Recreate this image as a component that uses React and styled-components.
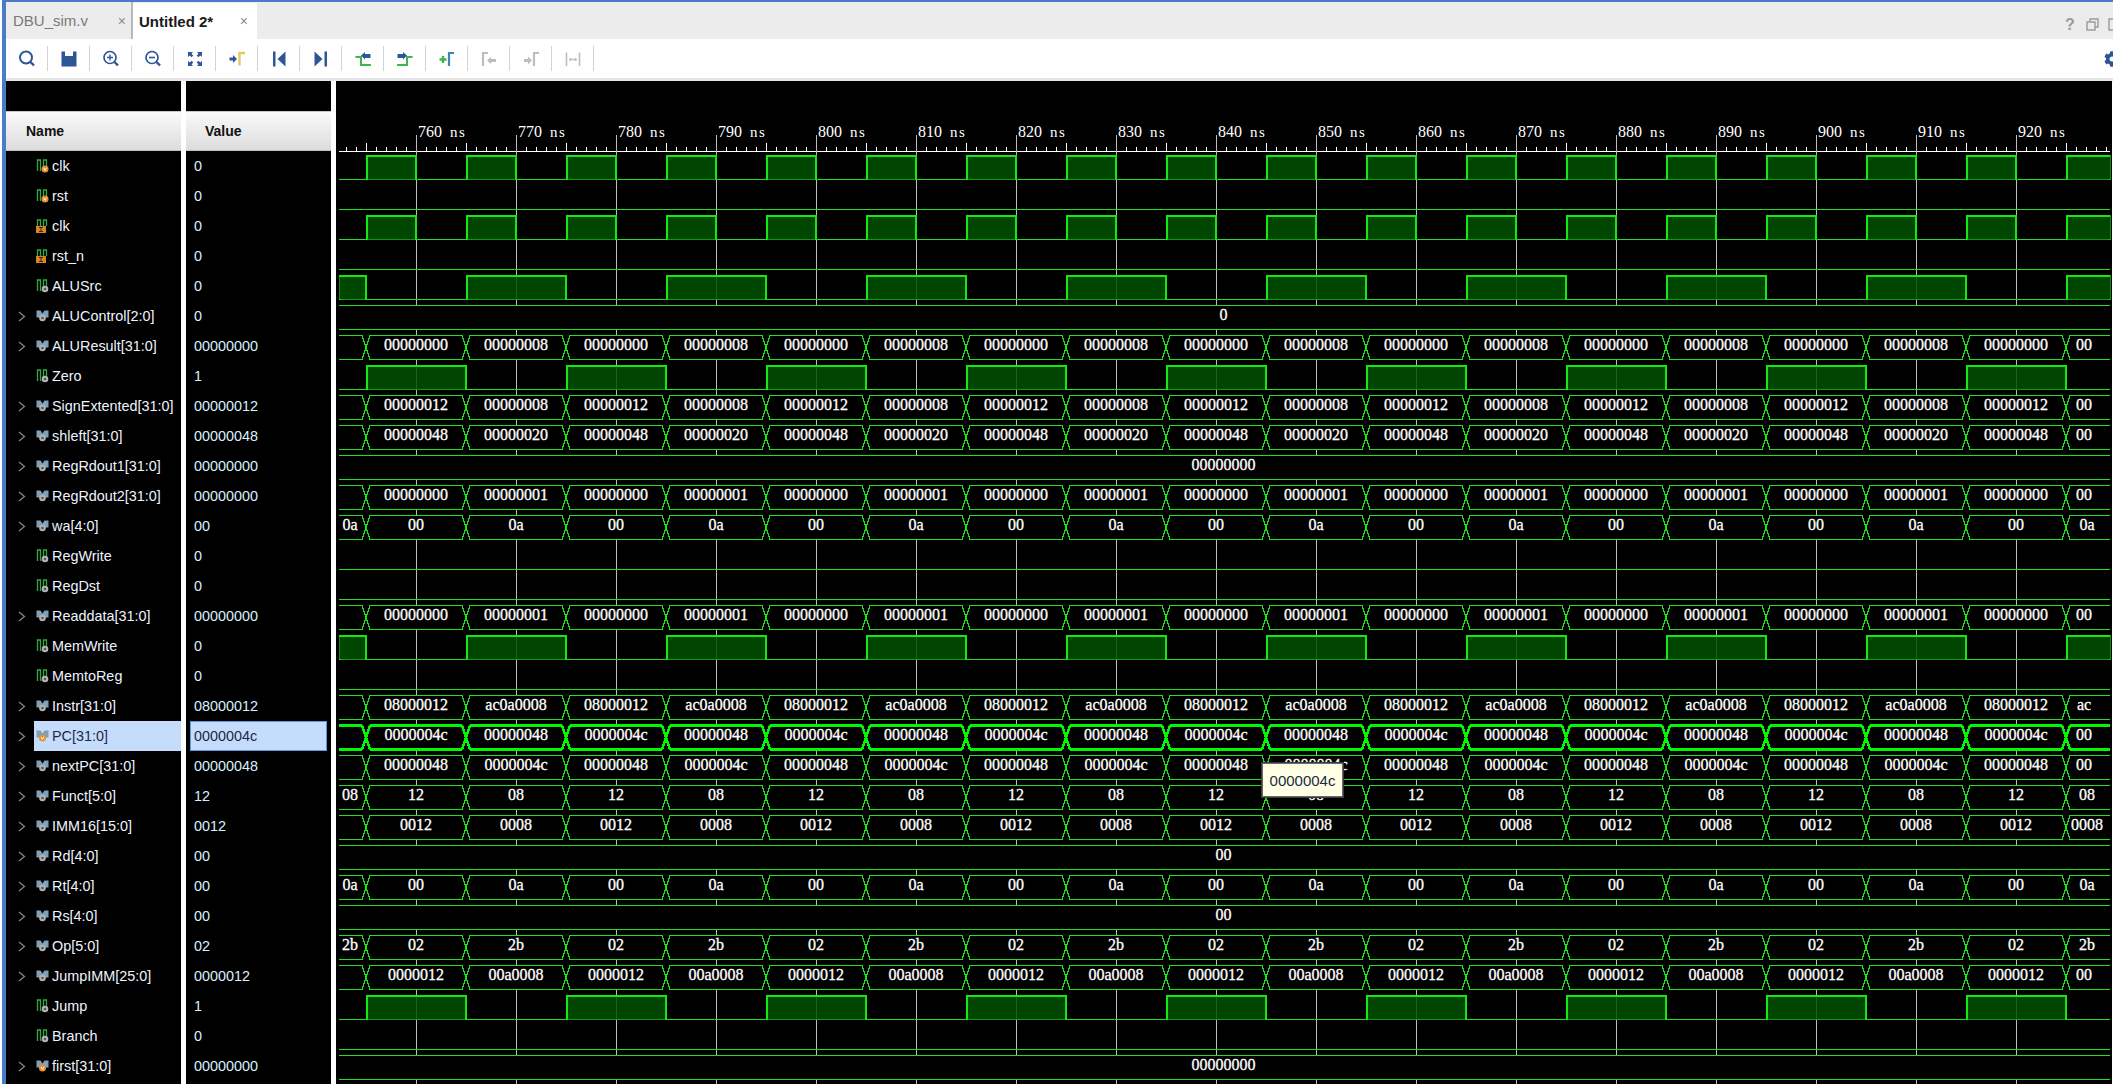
import React from 'react';
import styled, { createGlobalStyle } from 'styled-components';
import { FaCog } from 'react-icons/fa';

const GlobalStyle = createGlobalStyle`
  html, body {
    margin: 0;
    height: 100%;
    overflow: hidden;
    background: #fff;
    font-family: "Liberation Sans", Arial, sans-serif;
  }
`;

const Page = styled.div`
  height: 1084px;
  padding-left: 2px;
  box-sizing: border-box;
  overflow: hidden;
`;

const Frame = styled.div`
  display: flex;
  flex-direction: column;
  height: 100%;
  box-sizing: border-box;
  border-top: 2px solid #4a7cc7;
  border-left: 4px solid #4a7cc7;
`;

const TabBar = styled.div`
  display: flex;
  align-items: stretch;
  height: 37px;
  background: #ececec;
  flex: none;
`;

const Tab = styled.div`
  display: flex;
  align-items: center;
  justify-content: space-between;
  box-sizing: border-box;
  width: ${(p) => (p.$active ? '124px' : '127px')};
  margin-top: ${(p) => (p.$active ? '1px' : '0')};
  padding: 0 ${(p) => (p.$active ? '9px' : '5px')} 0 ${(p) => (p.$active ? '6px' : '7px')};
  background: ${(p) => (p.$active ? '#fff' : '#ececec')};
  border-right: ${(p) => (p.$active ? 'none' : '2px solid #b8b8b8')};
  color: ${(p) => (p.$active ? '#1a1a1a' : '#7a7a7a')};
  font-size: 15px;
  font-weight: ${(p) => (p.$active ? 700 : 400)};
  white-space: nowrap;
`;

const TabClose = styled.span`
  color: #8a8a8a;
  font-size: 14px;
  font-weight: 400;
`;

const WindowActions = styled.div`
  display: flex;
  align-items: center;
  gap: 9px;
  margin-left: auto;
  margin-right: -8px;
  padding-top: 8px;
  color: #9a9a9a;
`;

const Help = styled.span`
  font-size: 16px;
  font-weight: 700;
  width: 14px;
  text-align: center;
`;

const Toolbar = styled.div`
  display: flex;
  align-items: center;
  height: 39px;
  flex: none;
  background: #fff;
  border-bottom: 3px solid #e6e6e6;
`;

const ToolButton = styled.div`
  display: flex;
  align-items: center;
  justify-content: center;
  box-sizing: border-box;
  width: 42px;
  height: 25px;
  border-right: 1px solid #d4d4d4;
`;

const GearSlot = styled.div`
  display: flex;
  margin-left: auto;
  margin-right: -7px;
  color: #2f5597;
`;

const Viewer = styled.div`
  display: flex;
  flex: 1;
  min-height: 0;
  gap: 5px;
  background: #fff;
  padding-right: 1px;
`;

const Column = styled.div`
  flex: none;
  width: ${(p) => p.$width}px;
  background: #000;
  padding-top: 30px;
  overflow: hidden;
`;

const ColumnHeader = styled.div`
  display: flex;
  align-items: center;
  box-sizing: border-box;
  height: 40px;
  padding-left: ${(p) => p.$indent}px;
  background: linear-gradient(#fafafa, #dcdcdc);
  border-top: 1px solid #c8c8c8;
  border-bottom: 1px solid #bdbdbd;
  color: #111;
  font-size: 14px;
  font-weight: 700;
`;

const NameRow = styled.div`
  display: flex;
  align-items: center;
  height: 30px;
  position: relative;
  padding-left: 28px;
  color: ${(p) => (p.$selected ? '#1a2a44' : '#eef4ff')};
  font-size: 14.4px;
  white-space: nowrap;
`;

const Chevron = styled.svg`
  position: absolute;
  left: 12px;
  top: 10px;
`;

const NameCell = styled.div`
  display: flex;
  align-items: center;
  gap: 3px;
  box-sizing: border-box;
  flex: 1;
  height: 100%;
  padding: 0 0 1px 2px;
  background: ${(p) => (p.$selected ? '#c6dcfd' : 'transparent')};
`;

const ValueRow = styled.div`
  display: flex;
  align-items: center;
  box-sizing: border-box;
  height: 30px;
  margin: 0 4px;
  padding: 0 0 1px 3px;
  color: ${(p) => (p.$selected ? '#1a2a44' : '#dcefff')};
  background: ${(p) => (p.$selected ? '#c6dcfd' : 'transparent')};
  border: 1px solid ${(p) => (p.$selected ? '#5a9bd5' : 'transparent')};
  font-size: 14.4px;
`;

const WaveColumn = styled.div`
  position: relative;
  flex: 1;
  background: #000;
  overflow: hidden;
`;

const WaveSvg = styled.svg`
  display: block;
`;

const RulerLabel = styled.text`
  fill: #fff;
  font-family: "Liberation Serif", serif;
  font-size: 16px;
`;

const RulerUnit = styled.tspan`
  font-size: 15px;
  letter-spacing: 1.5px;
`;

const BusLabel = styled.text`
  fill: #fff;
  stroke: #fff;
  stroke-width: 0.3px;
  font-family: "Liberation Serif", serif;
  font-size: 16px;
  text-anchor: middle;
`;

const Tooltip = styled.div`
  position: absolute;
  left: 926px;
  top: 682px;
  display: flex;
  align-items: center;
  justify-content: center;
  box-sizing: border-box;
  width: 81px;
  height: 34px;
  background: #ffffe6;
  border: 1px solid #6a6a6a;
  box-shadow: 0 0 0 1px #3a3a3a;
  color: #1a2a44;
  font-size: 15px;
`;

const BLUE = '#2f5597';
const GREY = '#bdbdbd';
const GREEN = '#3fb54a';

const Tool = ({ children }) => (
  <svg width="20" height="20" viewBox="0 0 20 20" fill="none">{children}</svg>
);

const toolIcons = [
  <Tool key="find">
    <circle cx="9" cy="8.5" r="6" stroke={BLUE} strokeWidth="2" />
    <path d="M13.5 13l3.5 3.5" stroke={BLUE} strokeWidth="2.4" />
  </Tool>,
  <Tool key="save">
    <path d="M2.5 2.5H6V7H14V2.5H17.5V17.5H2.5Z" fill={BLUE} />
  </Tool>,
  <Tool key="zoomin">
    <circle cx="9" cy="8.5" r="6" stroke={BLUE} strokeWidth="1.7" />
    <path d="M6 8.5h6M9 5.5v6" stroke={BLUE} strokeWidth="1.4" />
    <path d="M13.5 13l3.5 3.5" stroke={BLUE} strokeWidth="2.4" />
  </Tool>,
  <Tool key="zoomout">
    <circle cx="9" cy="8.5" r="6" stroke={BLUE} strokeWidth="1.7" />
    <path d="M6 8.5h6" stroke={BLUE} strokeWidth="1.6" />
    <path d="M13.5 13l3.5 3.5" stroke={BLUE} strokeWidth="2.4" />
  </Tool>,
  <Tool key="fit">
    <path d="M3 3H8L6.5 4.8 8.3 6.6 6.6 8.3 4.8 6.5 3 8ZM17 3V8L15.2 6.5 13.4 8.3 11.7 6.6 13.5 4.8 12 3ZM3 17V12L4.8 13.5 6.6 11.7 8.3 13.4 6.5 15.2 8 17ZM17 17H12L13.5 15.2 11.7 13.4 13.4 11.7 15.2 13.5 17 12Z" fill={BLUE} />
  </Tool>,
  <Tool key="marker">
    <path d="M2.5 8.5H6V6L10 10 6 14V11.5H2.5Z" fill={BLUE} />
    <path d="M12.5 16.5V4H18" stroke="#e8c860" strokeWidth="2.4" />
  </Tool>,
  <Tool key="start">
    <path d="M4 2.5H6.5V17.5H4ZM16.5 2.5V17.5L8.5 10Z" fill={BLUE} />
  </Tool>,
  <Tool key="end">
    <path d="M13.5 2.5H16V17.5H13.5ZM3.5 2.5V17.5L11.5 10Z" fill={BLUE} />
  </Tool>,
  <Tool key="prev">
    <path d="M2.5 8H8V16H18" stroke={GREEN} strokeWidth="2" />
    <path d="M8 6.5L12 3V5H17.5V9H12V10.5Z" fill={BLUE} />
  </Tool>,
  <Tool key="next">
    <path d="M2 16H12V8H17.5" stroke={GREEN} strokeWidth="2" />
    <path d="M12 6.5L8 3V5H2.5V9H8V10.5Z" fill={BLUE} />
  </Tool>,
  <Tool key="add">
    <path d="M2.5 10.5H9.5M6 7V14" stroke={GREEN} strokeWidth="2.4" />
    <path d="M12 17V4H17" stroke="#3f86b8" strokeWidth="2.2" />
  </Tool>,
  <Tool key="prevm">
    <path d="M4 17V4H9" stroke={GREY} strokeWidth="2.2" />
    <path d="M8 11.5L12 8V10H17V13H12V15Z" fill={GREY} />
  </Tool>,
  <Tool key="nextm">
    <path d="M3 10H7V7.5L11 11.5 7 15.5V13H3Z" fill={GREY} />
    <path d="M13 17V4H18" stroke={GREY} strokeWidth="2.2" />
  </Tool>,
  <Tool key="delta">
    <path d="M3.5 3.5V17M16.5 3.5V17M6 10.5H14" stroke={GREY} strokeWidth="1.6" />
    <path d="M6 10.5L8 8.5V12.5ZM14 10.5L12 8.5V12.5Z" fill={GREY} />
  </Tool>,
];

const Gear = ({ x = 9, y = 10 }) => (
  <>
    <circle cx={x} cy={y} r="3.3" fill="#b4b4b4" />
    <circle cx={x} cy={y} r="1.3" fill="#555" />
  </>
);

const RegBadge = ({ x = 9, y = 10 }) => (
  <>
    <circle cx={x} cy={y} r="3.5" fill="#e8912d" />
    <path d={`M${x - 1.4} ${y - 1.2}L${x} ${y + 1.4}L${x + 1.4} ${y - 1.2}`} stroke="#fff" strokeWidth="0.9" fill="none" />
  </>
);

const SignalIcon = ({ kind }) => {
  const isBus = kind === 'bus' || kind === 'busreg';
  return (
    <svg width="13" height="14" viewBox="0 0 13 14" fill="none">
      {isBus ? (
        <path d="M0.5 1.5H4.5L6.5 4.5 8.5 1.5H12.5V8.5H9L6.5 10 4 8.5H0.5Z" fill="#7fa0b8" />
      ) : (
        <path d="M1.5 12V1H4.5V12M7.5 10V1H10.5V7" stroke="#35a845" strokeWidth="1.3" />
      )}
      {kind === 'input' && (
        <>
          <rect x="0" y="7" width="10" height="7" fill="#d98428" />
          <path d="M3 8.5H7M5 8.5V12.5M3 12.5H7" stroke="#3a2a10" strokeWidth="1" />
        </>
      )}
      {kind === 'reg' && <RegBadge x={9} y={10} />}
      {kind === 'wire' && <Gear x={9} y={10} />}
      {kind === 'bus' && <Gear x={6.5} y={9} />}
      {kind === 'busreg' && <RegBadge x={6.5} y={9} />}
    </svg>
  );
};

const alt = (a, b) => ({ type: 'bus', a, b });
const signals = [
  { name: 'clk', value: '0', icon: 'reg', wave: { type: 'clock' } },
  { name: 'rst', value: '0', icon: 'reg', wave: { type: 'low' } },
  { name: 'clk', value: '0', icon: 'input', wave: { type: 'clock' } },
  { name: 'rst_n', value: '0', icon: 'input', wave: { type: 'low' } },
  { name: 'ALUSrc', value: '0', icon: 'wire', wave: { type: 'odd' } },
  { name: 'ALUControl[2:0]', value: '0', icon: 'bus', wave: { type: 'const', label: '0' } },
  { name: 'ALUResult[31:0]', value: '00000000', icon: 'bus', wave: alt('00000000', '00000008') },
  { name: 'Zero', value: '1', icon: 'wire', wave: { type: 'even' } },
  { name: 'SignExtented[31:0]', value: '00000012', icon: 'bus', wave: alt('00000012', '00000008') },
  { name: 'shleft[31:0]', value: '00000048', icon: 'bus', wave: alt('00000048', '00000020') },
  { name: 'RegRdout1[31:0]', value: '00000000', icon: 'bus', wave: { type: 'const', label: '00000000' } },
  { name: 'RegRdout2[31:0]', value: '00000000', icon: 'bus', wave: alt('00000000', '00000001') },
  { name: 'wa[4:0]', value: '00', icon: 'bus', wave: alt('00', '0a') },
  { name: 'RegWrite', value: '0', icon: 'wire', wave: { type: 'low' } },
  { name: 'RegDst', value: '0', icon: 'wire', wave: { type: 'low' } },
  { name: 'Readdata[31:0]', value: '00000000', icon: 'bus', wave: alt('00000000', '00000001') },
  { name: 'MemWrite', value: '0', icon: 'wire', wave: { type: 'odd' } },
  { name: 'MemtoReg', value: '0', icon: 'wire', wave: { type: 'low' } },
  { name: 'Instr[31:0]', value: '08000012', icon: 'bus', wave: alt('08000012', 'ac0a0008') },
  { name: 'PC[31:0]', value: '0000004c', icon: 'busreg', selected: true, wave: alt('0000004c', '00000048') },
  { name: 'nextPC[31:0]', value: '00000048', icon: 'bus', wave: alt('00000048', '0000004c') },
  { name: 'Funct[5:0]', value: '12', icon: 'bus', wave: alt('12', '08') },
  { name: 'IMM16[15:0]', value: '0012', icon: 'bus', wave: alt('0012', '0008') },
  { name: 'Rd[4:0]', value: '00', icon: 'bus', wave: { type: 'const', label: '00' } },
  { name: 'Rt[4:0]', value: '00', icon: 'bus', wave: alt('00', '0a') },
  { name: 'Rs[4:0]', value: '00', icon: 'bus', wave: { type: 'const', label: '00' } },
  { name: 'Op[5:0]', value: '02', icon: 'bus', wave: alt('02', '2b') },
  { name: 'JumpIMM[25:0]', value: '0000012', icon: 'bus', wave: alt('0000012', '00a0008') },
  { name: 'Jump', value: '1', icon: 'wire', wave: { type: 'even' } },
  { name: 'Branch', value: '0', icon: 'wire', wave: { type: 'low' } },
  { name: 'first[31:0]', value: '00000000', icon: 'busreg', wave: { type: 'const', label: '00000000' } },
];

// wave geometry, in page pixels: 100px = 10ns, 760ns sits at x=416
const X0 = 339;
const X1 = 2110;
const STEP = 100;
const FIRST_EDGE = 366;
const edges = Array.from({ length: 18 }, (_, i) => FIRST_EDGE + i * STEP);
const LINE = '#1fe01f';

const highSpans = (type) => {
  const spans = [];
  if (type === 'clock') {
    edges.forEach((e) => spans.push([e, Math.min(e + 50, X1)]));
  } else if (type === 'odd') {
    spans.push([X0, FIRST_EDGE]);
    edges.forEach((e, i) => i % 2 === 1 && spans.push([e, Math.min(e + STEP, X1)]));
  } else if (type === 'even') {
    edges.forEach((e, i) => i % 2 === 0 && spans.push([e, Math.min(e + STEP, X1)]));
  }
  return spans;
};

const BitWave = ({ y, type }) => {
  const low = y + 29.5;
  const high = y + 5.5;
  const spans = highSpans(type);
  return (
    <g shapeRendering="crispEdges">
      {spans.map(([a, b]) => (
        <rect key={a} x={a} y={high} width={b - a} height={24} fill="#005200" fillOpacity="0.85" stroke="#0c8f0c" />
      ))}
      <path d={`M${X0} ${low}H${X1}`} stroke={LINE} />
      {spans.map(([a, b]) => (
        <path key={`${a}-floor`} d={`M${a + 2} ${low}H${b - 1}`} stroke="#0c9a0c" />
      ))}
      {spans.map(([a, b]) => (
        <path
          key={a}
          d={`M${a === X0 ? a : a + 0.5} ${a === X0 ? high + 0.5 : low}${a === X0 ? '' : 'V' + (high + 0.5)}H${b}${b === X1 ? '' : 'V' + low}`}
          stroke="#14e814"
          strokeWidth="2"
          fill="none"
        />
      ))}
    </g>
  );
};

const clipLabel = (text) => (text.length > 4 ? text.slice(0, 2) : text);

const BusWave = ({ y, wave, bold }) => {
  const top = y + 5.5;
  const bottom = y + 29.5;
  const color = bold ? '#00f800' : LINE;
  const width = bold ? 2.5 : 1;
  if (wave.type === 'const') {
    return (
      <g>
        <rect x={X0} y={top} width={X1 - X0} height={24} fill="#000" />
        <path d={`M${X0} ${top}H${X1}M${X0} ${bottom}H${X1}`} stroke={LINE} shapeRendering="crispEdges" />
        <BusLabel x={(X0 + X1) / 2 - 1} y={y + 20}>{wave.label}</BusLabel>
      </g>
    );
  }
  let d = '';
  [X0, ...edges].forEach((e, i) => {
    const from = i === 0 ? X0 : e + 4;
    const to = i === edges.length ? X1 : edges[i] - 4;
    d += `M${from} ${top}H${to}M${from} ${bottom}H${to}`;
  });
  edges.forEach((e) => {
    d += `M${e - 4} ${top}L${e + 4} ${bottom}M${e - 4} ${bottom}L${e + 4} ${top}`;
  });
  const short = wave.a.length <= 2;
  return (
    <g>
      <rect x={X0} y={top} width={X1 - X0} height={24} fill="#000" />
      <path d={d} stroke={color} strokeWidth={width} fill="none" shapeRendering="crispEdges" />
      {short && <BusLabel x={350} y={y + 20}>{wave.b}</BusLabel>}
      {edges.slice(0, -1).map((e, i) => (
        <BusLabel key={e} x={e + STEP / 2} y={y + 20}>{i % 2 === 0 ? wave.a : wave.b}</BusLabel>
      ))}
      <BusLabel x={wave.b.length > 4 ? 2084 : 2087} y={y + 20}>{clipLabel(wave.b)}</BusLabel>
    </g>
  );
};

const ticks = Array.from({ length: 177 }, (_, i) => 346 + i * 10);
const gridLines = Array.from({ length: 17 }, (_, i) => 416 + i * STEP);

const Waves = () => (
  <WaveSvg width="1776" height="1003" viewBox="336 81 1776 1003">
    <g shapeRendering="crispEdges">
      <path d={`M${X0} 151.5H${X1}`} stroke="#fff" />
      {ticks.map((x) => (
        <path key={x} d={`M${x + 0.5} ${(x - 316) % 50 === 0 ? 143 : 147}V151`} stroke="#fff" />
      ))}
      {gridLines.map((x) => (
        <path key={x} d={`M${x + 0.5} 135V1084`} stroke="#bdbdbd" />
      ))}
    </g>
    {gridLines.map((x, i) => (
      <RulerLabel key={x} x={x + 2} y={137}>{`${760 + i * 10}`}<RulerUnit dx="8">ns</RulerUnit></RulerLabel>
    ))}
    {signals.map((s, i) => {
      const y = 150 + i * 30;
      return s.wave.type === 'bus' || s.wave.type === 'const'
        ? <BusWave key={i} y={y} wave={s.wave} bold={s.selected} />
        : <BitWave key={i} y={y} type={s.wave.type} />;
    })}
  </WaveSvg>
);

const App = () => (
  <Page>
    <GlobalStyle />
    <Frame>
      <TabBar>
        <Tab>DBU_sim.v<TabClose>×</TabClose></Tab>
        <Tab $active>Untitled 2*<TabClose>×</TabClose></Tab>
        <WindowActions>
          <Help>?</Help>
          <svg width="13" height="13" viewBox="0 0 13 13" fill="none" stroke="#9a9a9a" strokeWidth="1.4">
            <rect x="1" y="4" width="8" height="8" fill="#ececec" />
            <path d="M4 4V1H12V9H9" />
          </svg>
          <svg width="13" height="13" viewBox="0 0 13 13" fill="none" stroke="#9a9a9a" strokeWidth="1.4">
            <rect x="1" y="1" width="11" height="11" />
          </svg>
        </WindowActions>
      </TabBar>
      <Toolbar>
        {toolIcons.map((icon) => (
          <ToolButton key={icon.key}>{icon}</ToolButton>
        ))}
        <GearSlot><FaCog size={16} /></GearSlot>
      </Toolbar>
      <Viewer>
        <Column $width={175}>
          <ColumnHeader $indent={20}>Name</ColumnHeader>
          {signals.map((s, i) => (
            <NameRow key={i} $selected={s.selected}>
              {s.wave.type === 'bus' || s.wave.type === 'const' ? (
                <Chevron width="8" height="11" viewBox="0 0 8 11" fill="none">
                  <path d="M1 1l5.5 4.5L1 10" stroke="#8a8a8a" strokeWidth="1.2" />
                </Chevron>
              ) : null}
              <NameCell $selected={s.selected}>
                <SignalIcon kind={s.icon} />
                {s.name}
              </NameCell>
            </NameRow>
          ))}
        </Column>
        <Column $width={145}>
          <ColumnHeader $indent={19}>Value</ColumnHeader>
          {signals.map((s, i) => (
            <ValueRow key={i} $selected={s.selected}>{s.value}</ValueRow>
          ))}
        </Column>
        <WaveColumn>
          <Waves />
          <Tooltip>0000004c</Tooltip>
        </WaveColumn>
      </Viewer>
    </Frame>
  </Page>
);

export default App;
